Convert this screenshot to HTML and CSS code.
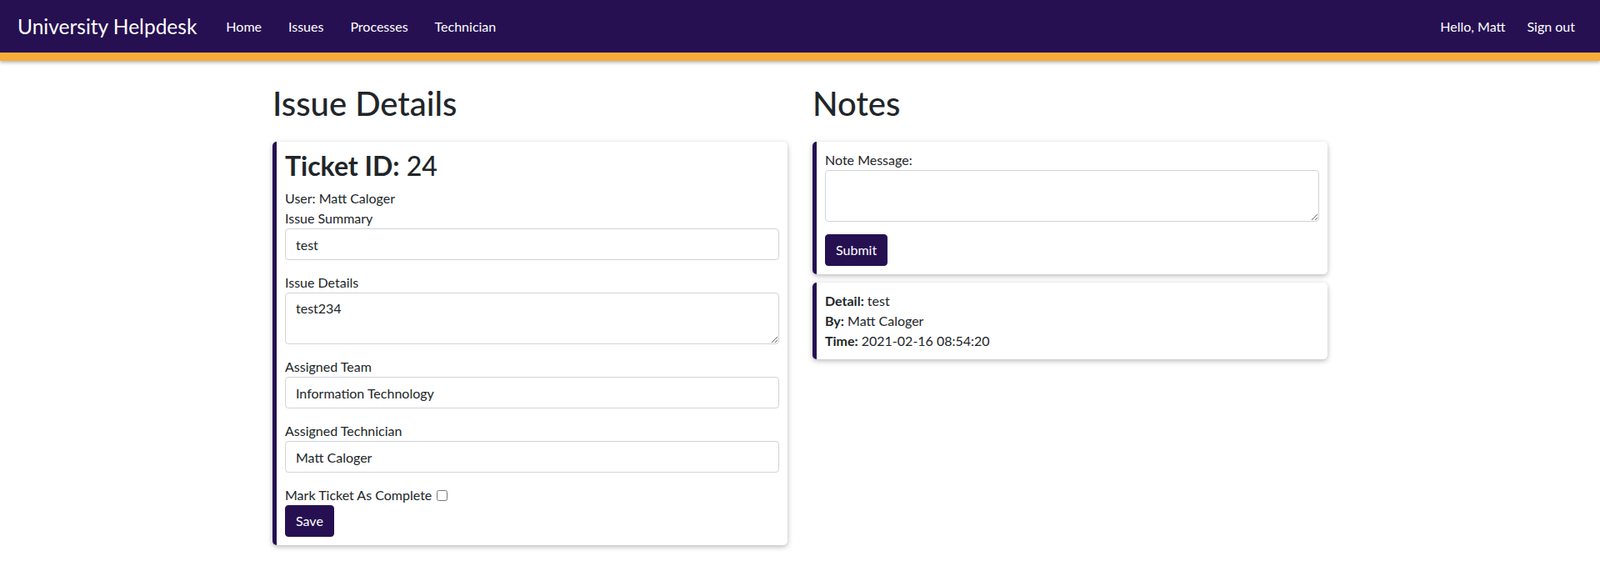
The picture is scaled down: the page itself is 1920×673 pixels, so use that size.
FILE: index.html
```html
<!DOCTYPE html>
<html lang="en">
<head>
<meta charset="utf-8">
<title>University Helpdesk</title>
<link rel="stylesheet" href="styles.css">
</head>
<body>
<nav class="navbar">
  <a class="brand" href="#">University Helpdesk</a>
  <ul class="nav-links">
    <li><a href="#">Home</a></li>
    <li><a href="#">Issues</a></li>
    <li><a href="#">Processes</a></li>
    <li><a href="#">Technician</a></li>
  </ul>
  <div class="nav-right">
    <span class="hello">Hello, Matt</span>
    <a href="#" class="signout">Sign out</a>
  </div>
</nav>
<main class="container">
  <section class="col">
    <h1>Issue Details</h1>
    <div class="card">
      <h2><strong>Ticket ID:</strong> 24</h2>
      <div class="line">User: Matt Caloger</div>
      <div class="group">
        <label>Issue Summary</label>
        <input class="control" type="text" value="test">
      </div>
      <div class="group">
        <label>Issue Details</label>
        <textarea class="control area" rows="2">test234</textarea>
      </div>
      <div class="group">
        <label>Assigned Team</label>
        <input class="control" type="text" value="Information Technology">
      </div>
      <div class="group">
        <label>Assigned Technician</label>
        <input class="control" type="text" value="Matt Caloger">
      </div>
      <div class="line">Mark Ticket As Complete <input type="checkbox" class="check"></div>
      <button class="btn">Save</button>
    </div>
  </section>
  <section class="col">
    <h1>Notes</h1>
    <div class="card">
      <label>Note Message:</label>
      <textarea class="control area note" rows="2"></textarea>
      <button class="btn">Submit</button>
    </div>
    <div class="card">
      <div class="line"><strong>Detail:</strong> test</div>
      <div class="line"><strong>By:</strong> Matt Caloger</div>
      <div class="line"><strong>Time:</strong> 2021-02-16 08:54:20</div>
    </div>
  </section>
</main>
</body>
</html>
```

FILE: styles.css
```css
* { box-sizing: border-box; }
html, body { margin: 0; padding: 0; }
body {
  font-family: Lato, "Noto Sans", Arial, sans-serif;
  font-size: 16px;
  line-height: 1.5;
  color: #212529;
  background: #fff;
}
a { text-decoration: none; }

.navbar {
  display: flex;
  align-items: center;
  height: 73px;
  background: #261052;
  border-bottom: 10px solid #f6ad37;
  box-shadow: 0 2px 4px rgba(0, 0, 0, 0.3);
  padding: 0 30px 0 21px;
}
.brand {
  color: #fff;
  font-size: 24.5px;
  line-height: 36px;
  margin-right: 19px;
}
.nav-links {
  display: flex;
  list-style: none;
  margin: 0;
  padding: 0;
}
.nav-links a {
  display: block;
  color: #fff;
  padding: 8px 16px;
  line-height: 24px;
}
.nav-right {
  margin-left: auto;
  display: flex;
  gap: 26px;
  color: #fff;
}
.nav-right a { color: #fff; }

.container {
  width: 1266px;
  margin: 27px auto 0;
  display: grid;
  grid-template-columns: 618px 618px;
  gap: 30px;
  align-items: start;
}
h1 {
  font-size: 40px;
  line-height: 48px;
  font-weight: 500;
  margin: 0 0 22px;
}
h2 {
  font-size: 32px;
  line-height: 38.4px;
  font-weight: 500;
  margin: 0 0 8px;
}
h2 strong { font-weight: 700; }
.card {
  background: #fff;
  border-left: 5px solid #261052;
  border-radius: 5px;
  box-shadow: 0 2px 6px rgba(0, 0, 0, 0.28);
  padding: 10px;
  margin-bottom: 10px;
}
label { display: block; }
.group { margin-bottom: 15px; }
.control {
  display: block;
  width: 100%;
  height: 38px;
  padding: 6px 12px;
  font: inherit;
  line-height: 24px;
  color: #212529;
  background: #fff;
  border: 1px solid #ced4da;
  border-radius: 4px;
  margin: 0;
}
.area { height: 62px; resize: vertical; }
.note { margin-bottom: 15px; }
.check {
  width: 13px;
  height: 13px;
  margin: 0 0 0 2px;
  vertical-align: -1px;
}
.btn {
  display: block;
  font: inherit;
  line-height: 24px;
  color: #fff;
  background: #261052;
  border: 1px solid #261052;
  border-radius: 4px;
  padding: 6px 12px;
  cursor: pointer;
}
strong { font-weight: 700; }
```
